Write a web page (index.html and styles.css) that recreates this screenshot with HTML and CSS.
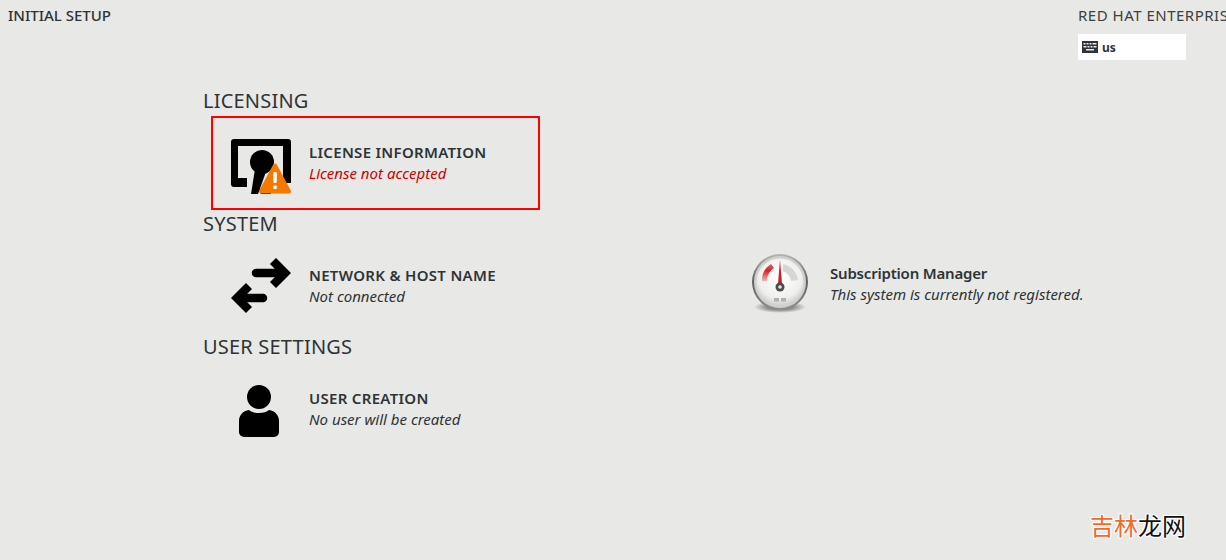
FILE: index.html
```html
<!DOCTYPE html>
<html lang="en">
<head>
    <meta charset="UTF-8">
    <meta name="viewport" content="width=device-width, initial-scale=1.0">
    <title>Initial Setup</title>
    <link rel="stylesheet" href="styles.css">
</head>
<body>
    <header class="top-bar">
        <div class="top-title">INITIAL SETUP</div>
        <div class="top-right">
            <div class="product-name">RED HAT ENTERPRIS</div>
            <div class="layout-box">
                <svg class="kbd-icon" width="16" height="12" viewBox="0 0 16 12">
                    <rect width="16" height="12" fill="#2e3436"/>
                    <g fill="#e8e8e6">
                        <rect x="1.500" y="2" width="2" height="1.500"/>
                        <rect x="4.500" y="2" width="2" height="1.500"/>
                        <rect x="7.500" y="2" width="2" height="1.500"/>
                        <rect x="10.500" y="2" width="4" height="1.500"/>
                        <rect x="1.500" y="5" width="3" height="1.500"/>
                        <rect x="5.500" y="5" width="2" height="1.500"/>
                        <rect x="8.500" y="5" width="2" height="1.500"/>
                        <rect x="11.500" y="5" width="3" height="1.500"/>
                        <rect x="4" y="8" width="8" height="1.500"/>
                    </g>
                </svg>
                <span class="layout-name">us</span>
            </div>
        </div>
    </header>

    <main class="hub">
        <section class="category">
            <h2 class="category-title">LICENSING</h2>
            <div class="spoke-row">
                <div class="spoke spoke-warn">
                    <svg class="spoke-icon" width="60" height="56" viewBox="0 0 60 56">
                        <path d="M3 0H57a3 3 0 0 1 3 3V44H52V7H7V39H16V48H3a3 3 0 0 1-3-3V3a3 3 0 0 1 3-3z"/>
                        <circle cx="31" cy="23" r="12"/>
                        <path d="M24 30L20 55H27L36 30z"/>
                        <path d="M28 50h12v5H30z"/>
                        <path d="M44 26.500L30 52.500H58z" fill="#f57900" stroke="#f57900" stroke-width="4" stroke-linejoin="round"/>
                        <rect x="42.300" y="33" width="3.500" height="11" rx="1" fill="#fff"/>
                        <rect x="42.300" y="46.500" width="3.500" height="3.500" rx="1" fill="#fff"/>
                    </svg>
                    <div class="spoke-text">
                        <div class="spoke-title">LICENSE INFORMATION</div>
                        <div class="spoke-status status-error">License not accepted</div>
                    </div>
                </div>
            </div>
        </section>

        <section class="category">
            <h2 class="category-title">SYSTEM</h2>
            <div class="spoke-row">
                <div class="spoke">
                    <svg class="spoke-icon" width="60" height="56" viewBox="0 0 60 56" fill="none" stroke="#000" stroke-width="8.500">
                        <path d="M25 15H52" stroke-linecap="round"/>
                        <path d="M42 3L54 15L42 27"/>
                        <path d="M32 40H8" stroke-linecap="round"/>
                        <path d="M18 28L6 40L18 52"/>
                    </svg>
                    <div class="spoke-text">
                        <div class="spoke-title">NETWORK &amp; HOST NAME</div>
                        <div class="spoke-status">Not connected</div>
                    </div>
                </div>
                <div class="spoke spoke-addon">
                    <svg class="spoke-icon" width="60" height="62" viewBox="0 0 60 62">
                        <defs>
                            <linearGradient id="rim" x1="0" y1="0" x2="0" y2="1">
                                <stop offset="0" stop-color="#b5b5b3"/>
                                <stop offset="0.5" stop-color="#5f6062"/>
                                <stop offset="1" stop-color="#8f8f8d"/>
                            </linearGradient>
                            <radialGradient id="face" cx="0.5" cy="0.4" r="0.65">
                                <stop offset="0" stop-color="#ffffff"/>
                                <stop offset="0.7" stop-color="#efefed"/>
                                <stop offset="1" stop-color="#c4c4c2"/>
                            </radialGradient>
                            <radialGradient id="shade">
                                <stop offset="0.5" stop-color="#000" stop-opacity="0.4"/>
                                <stop offset="1" stop-color="#000" stop-opacity="0"/>
                            </radialGradient>
                            <linearGradient id="redfade" x1="0" y1="0" x2="0" y2="1">
                                <stop offset="0" stop-color="#e0606a"/>
                                <stop offset="0.4" stop-color="#d8202a"/>
                                <stop offset="1" stop-color="#f2b5b5"/>
                            </linearGradient>
                        </defs>
                        <ellipse cx="30" cy="54" rx="26" ry="6" fill="url(#shade)"/>
                        <circle cx="30" cy="29" r="28" fill="url(#rim)"/>
                        <circle cx="30" cy="29" r="26" fill="#d0d0ce"/>
                        <circle cx="30" cy="29" r="23.500" fill="url(#face)"/>
                        <path d="M12 28A19 19 0 0 1 21 11L24 15A15 15 0 0 0 17 28z" fill="url(#redfade)"/>
                        <path d="M33 11A19 19 0 0 1 48 27L41 28A13 13 0 0 0 33 18z" fill="#d6d6d4"/>
                        <path d="M30 7L32.200 33H27.800z" fill="#cc1f28"/>
                        <circle cx="30" cy="34" r="4.500" fill="#4a4c4f"/>
                        <circle cx="30" cy="34" r="1.800" fill="#e4e4e2"/>
                        <rect x="24" y="45" width="5" height="3.500" fill="#b0b0ae"/>
                        <rect x="31" y="45" width="5" height="3.500" fill="#b0b0ae"/>
                    </svg>
                    <div class="spoke-text">
                        <div class="spoke-title addon-title">Subscription Manager</div>
                        <div class="spoke-status">This system is currently not registered.</div>
                    </div>
                </div>
            </div>
        </section>

        <section class="category">
            <h2 class="category-title">USER SETTINGS</h2>
            <div class="spoke-row">
                <div class="spoke">
                    <svg class="spoke-icon" width="60" height="56" viewBox="0 0 60 56">
                        <circle cx="28" cy="16" r="12"/>
                        <path d="M8 40C8 34 12 30 18 29C22 33 34 33 38 29C44 30 48 34 48 40V51a5 5 0 0 1-5 5H13a5 5 0 0 1-5-5z"/>
                    </svg>
                    <div class="spoke-text">
                        <div class="spoke-title">USER CREATION</div>
                        <div class="spoke-status">No user will be created</div>
                    </div>
                </div>
            </div>
        </section>
    </main>

    <div class="watermark"><span class="wm-orange">吉林</span>龙网</div>
</body>
</html>
```

FILE: styles.css
```css
html, body {
    height: 100%;
}

body {
    margin: 0;
    background: #e8e8e6;
    color: #2e3436;
    font-family: "Noto Sans", sans-serif;
    overflow: hidden;
}

.top-bar {
    display: flex;
    justify-content: space-between;
    height: 88px;
    padding-left: 8px;
}

.top-title {
    font-size: 15px;
    font-weight: 500;
    line-height: 16px;
    padding-top: 7px;
}

.top-right {
    width: 148px;
    white-space: nowrap;
}

.product-name {
    font-size: 15px;
    letter-spacing: 0.5px;
    line-height: 16px;
    padding-top: 7px;
    margin-bottom: 11px;
    color: #3b4042;
}

.layout-box {
    display: flex;
    align-items: center;
    gap: 4px;
    width: 104px;
    height: 26px;
    padding-left: 4px;
    background: #fff;
}

.layout-name {
    font-size: 12px;
    font-weight: 700;
}

.hub {
    padding-left: 203px;
}

.category {
    height: 123px;
}

.category-title {
    margin: 0 0 2px;
    font-size: 20px;
    font-weight: 400;
    letter-spacing: 0.2px;
    line-height: 26px;
}

.spoke-row {
    display: flex;
    margin-left: 8px;
}

.spoke {
    display: flex;
    align-items: center;
    box-sizing: border-box;
    width: 329px;
    height: 94px;
    padding-left: 18px;
    border: 2px solid transparent;
}

.spoke-warn {
    border-color: #f00;
}

.spoke-warn .spoke-icon {
    margin-top: 8px;
}

.spoke-addon {
    width: auto;
    margin-left: 190px;
    margin-top: -2px;
}

.spoke-icon {
    flex: none;
    margin-right: 18px;
}

.spoke-title {
    font-size: 15px;
    font-weight: 600;
    letter-spacing: 0.3px;
    line-height: 21px;
    white-space: nowrap;
}

.spoke-status {
    font-size: 15px;
    font-style: italic;
    line-height: 21px;
    white-space: nowrap;
}

.spoke-addon .spoke-title {
    letter-spacing: -0.2px;
}

.spoke-addon .spoke-text {
    margin-left: 2px;
}

.status-error {
    color: #cc0000;
}

.watermark {
    position: absolute;
    left: 1090px;
    top: 507px;
    font-family: "Noto Sans CJK SC", sans-serif;
    font-size: 24px;
    line-height: 36px;
    color: #111;
    text-shadow: 1px 0 #fff, -1px 0 #fff, 0 1px #fff, 0 -1px #fff, 1px 1px #fff, -1px -1px #fff, 1px -1px #fff, -1px 1px #fff;
}

.wm-orange {
    color: #f4682c;
}
```
